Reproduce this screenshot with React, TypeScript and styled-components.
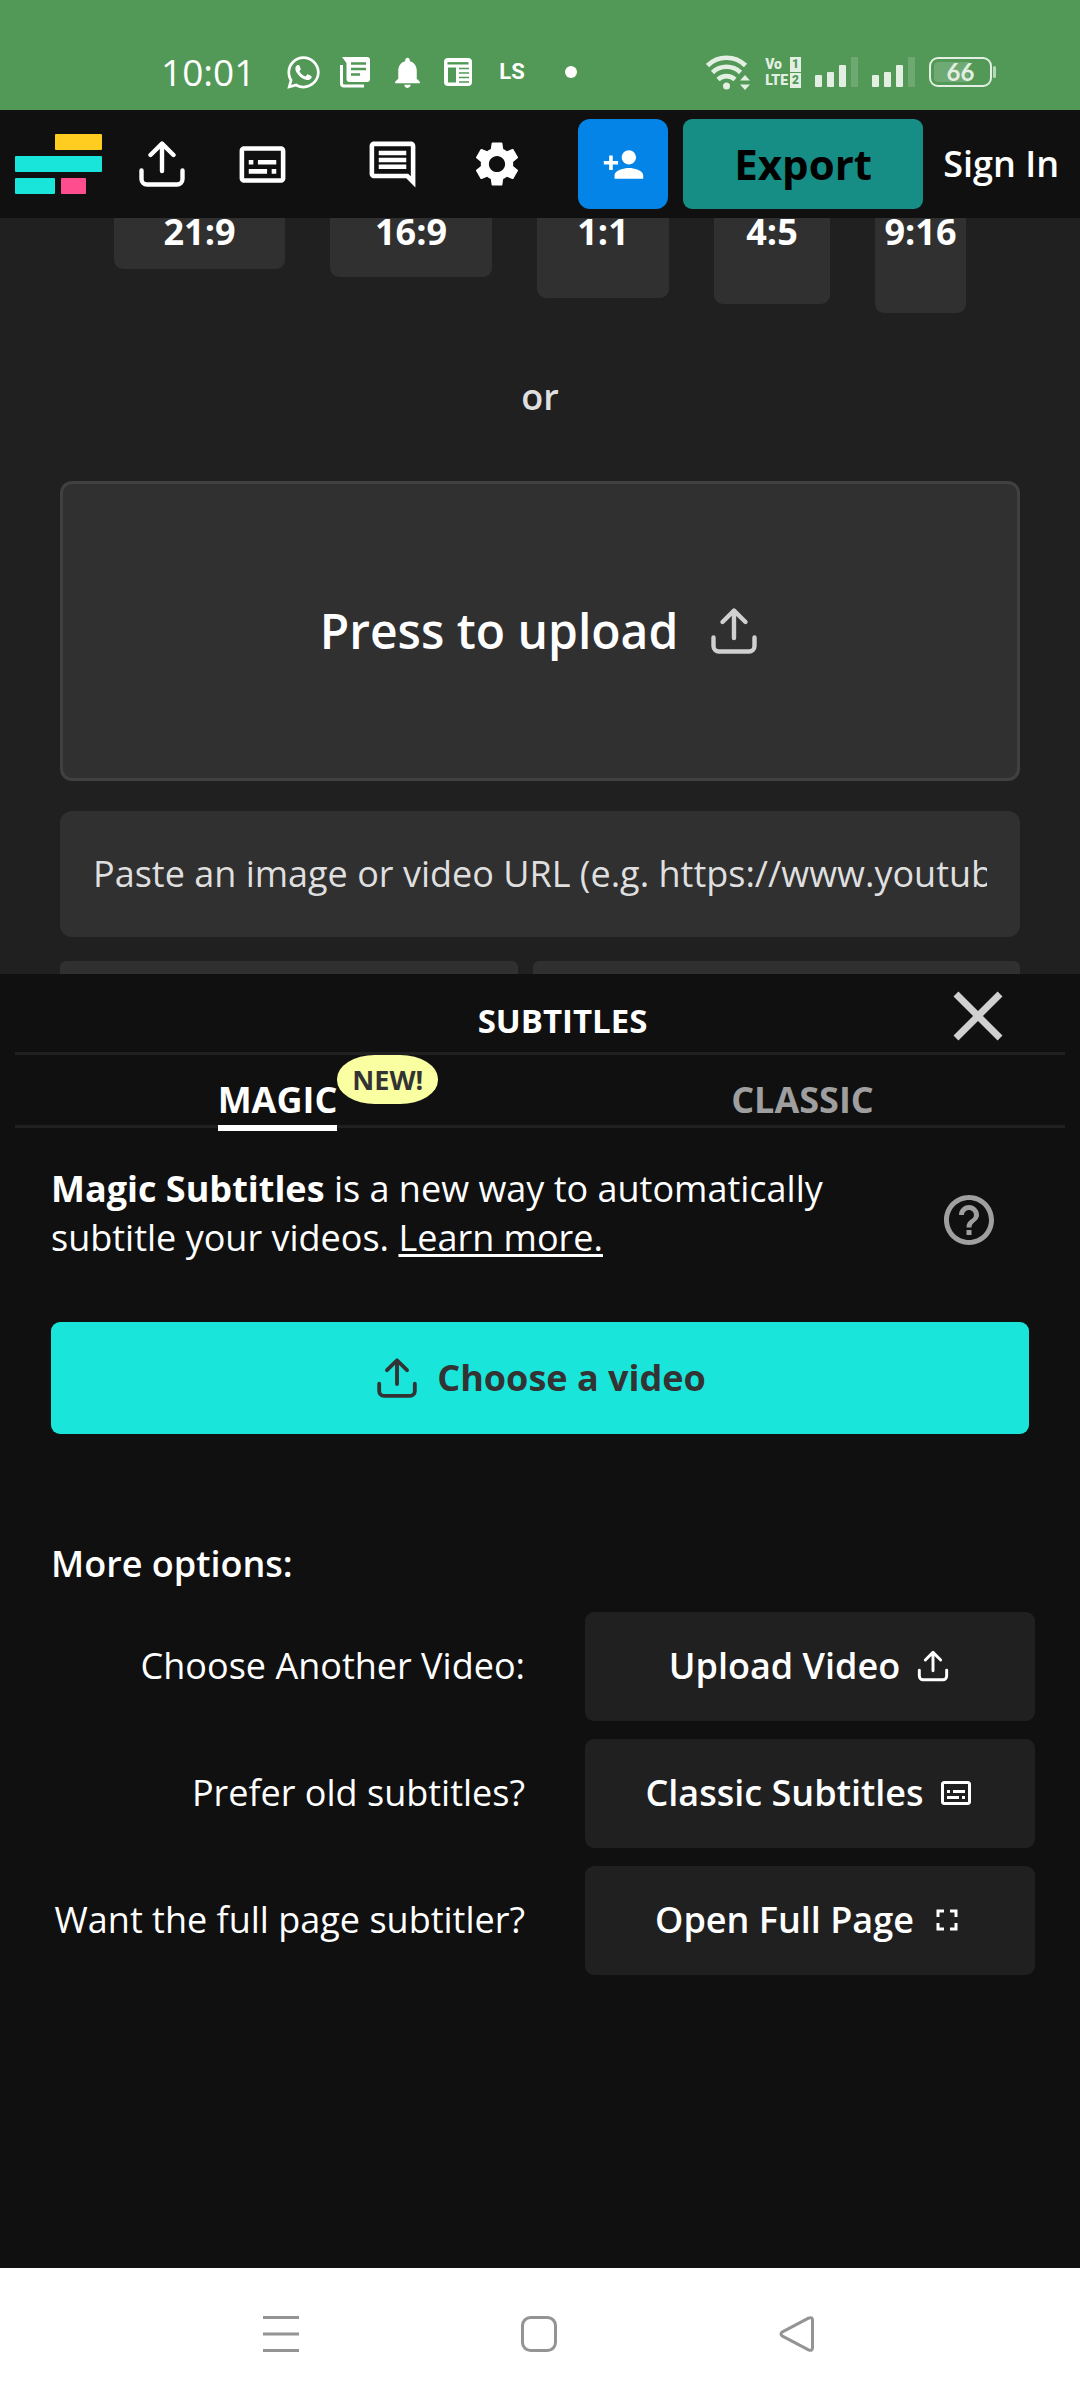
import React from "react";
import styled, { createGlobalStyle, css } from "styled-components";
import { MdOutlineSubtitles, MdOutlineComment, MdSettings, MdPersonAdd, MdClose, MdHelpOutline, MdFullscreen, MdNotifications } from "react-icons/md";
import { FaWhatsapp } from "react-icons/fa";

const Global = createGlobalStyle`
  * { box-sizing: border-box; }
  html, body { margin: 0; background: #101010; }
  body { font-family: "Open Sans", "Noto Sans", sans-serif; font-size: 36px; line-height: 48px; color: #fff; }
  button, input { font: inherit; color: inherit; border: 0; margin: 0; }
  button { padding: 0; background: none; cursor: pointer; }
  svg { display: block; flex: none; }
`;

const Page = styled.div`
  display: flex;
  flex-direction: column;
  min-height: 100vh;
`;

const StatusBar = styled.div`
  display: flex;
  justify-content: space-between;
  align-items: center;
  height: 110px;
  padding: 34px 88px 0 161px;
  background: #529856;
`;

const StatusGroup = styled.div<{ $gap: number }>`
  display: flex;
  align-items: center;
  gap: ${(p) => p.$gap}px;
`;

const Clock = styled.time`
  font-size: 37px;
  font-weight: 500;
  margin-right: 12px;
`;

const AppTag = styled.span`
  font: 700 22px/30px Roboto, sans-serif;
  margin-left: 9px;
`;

const Volte = styled.span`
  display: grid;
  grid-template-columns: auto auto;
  gap: 1px 2px;
  color: #e2efe2;
  font: 900 14px/15px Roboto, sans-serif;
`;

const SimBox = styled.span`
  padding: 0 2px;
  background: #e2efe2;
  color: #529856;
  font-size: 12px;
`;

const Battery = styled.span`
  position: relative;
  width: 63px;
  height: 30px;
  padding: 3px;
  border: 2px solid #e2efe2;
  border-radius: 9px;
  background: linear-gradient(90deg, #6fa973 66%, transparent 66%) content-box;
  color: #e2efe2;
  font: 700 24px/20px Lato, sans-serif;
  text-align: center;
  &::after {
    content: "";
    position: absolute;
    right: -6px;
    top: 7px;
    width: 3px;
    height: 12px;
    border-radius: 2px;
    background: #b9d6ba;
  }
`;

const Toolbar = styled.header`
  position: relative;
  z-index: 1;
  display: flex;
  align-items: center;
  height: 108px;
  padding: 0 15px;
  background: #101010;
`;

const ToolGroup = styled.div`
  display: flex;
  flex: 1;
  justify-content: space-between;
  align-items: center;
  padding: 0 54px 0 37px;
`;

const ToolPair = styled.div`
  display: flex;
  align-items: center;
  gap: 50px;
`;

const IconButton = styled.button`
  display: grid;
  place-items: center;
  flex: none;
`;

const HeaderButton = styled.button<{ $invite?: boolean }>`
  display: grid;
  place-items: center;
  height: 90px;
  border-radius: 9px;
  ${(p) =>
    p.$invite
      ? css`width: 90px; margin-right: 15px; background: #0384e6; border-radius: 12px;`
      : css`width: 240px; background: #168d85; color: #000; font-size: 42px; font-weight: 700;`}
`;

const SignIn = styled.a`
  margin: 0 6px 0 20px;
  color: #fff;
  font-weight: 600;
  text-decoration: none;
  white-space: nowrap;
`;

const Workspace = styled.main`
  display: flex;
  flex-direction: column;
  padding: 0 60px;
  margin-bottom: -96px;
  background: #202020;
`;

const Ratios = styled.div`
  display: flex;
  justify-content: center;
  align-items: center;
  gap: 45px;
  margin-top: -67px;
`;

const Ratio = styled.button<{ $ratio: string; $width: number }>`
  width: ${(p) => p.$width}px;
  aspect-ratio: ${(p) => p.$ratio};
  border-radius: 9px;
  background: #303030;
  font-weight: 700;
`;

const Or = styled.p`
  margin: 60px 0;
  text-align: center;
  color: #dfdfdf;
  font-weight: 600;
`;

const DropZone = styled.button`
  display: flex;
  justify-content: center;
  align-items: center;
  gap: 30px;
  height: 300px;
  border: 3px solid #404040;
  border-radius: 12px;
  background: #303030;
  font-size: 48px;
  font-weight: 600;
`;

const UrlField = styled.input`
  height: 126px;
  margin: 30px 0 24px;
  padding: 0 33px;
  border-radius: 12px;
  background: #303030;
  &::placeholder { color: #dfdfdf; opacity: 1; }
`;

const Sources = styled.div`
  display: grid;
  grid-template-columns: 458fr 487fr;
  gap: 15px;
`;

const Source = styled.button`
  height: 109px;
  border-radius: 6px;
  background: #303030;
`;

const Sheet = styled.section`
  position: relative;
  flex: 1;
  padding: 0 15px 60px;
  background: #101010;
`;

const SheetHead = styled.div`
  display: grid;
  grid-template-columns: 1fr auto 1fr;
  align-items: center;
  height: 81px;
  padding: 0 45px 0 90px;
  border-bottom: 3px solid #202020;
`;

const SheetTitle = styled.h2`
  grid-column: 2;
  margin: 10px 0 0;
  font-size: 33px;
  line-height: 48px;
  font-weight: 700;
`;

const CloseButton = styled(IconButton)`
  justify-self: end;
  color: #d0d0d0;
`;

const Tabs = styled.div`
  display: grid;
  grid-template-columns: 1fr 1fr;
  height: 73px;
  border-bottom: 3px solid #202020;
`;

const Tab = styled.button<{ $active?: boolean }>`
  position: relative;
  justify-self: center;
  height: 76px;
  padding-top: 21px;
  color: ${(p) => (p.$active ? "#fff" : "#9f9f9f")};
  font-weight: 700;
  border-bottom: 6px solid ${(p) => (p.$active ? "#fff" : "transparent")};
`;

const Badge = styled.span`
  position: absolute;
  left: 100%;
  top: 0;
  padding: 0 15px;
  border-radius: 38px / 24px;
  background: #faffa2;
  color: #333;
  font-size: 27px;
  line-height: 49px;
`;

const Body = styled.div`
  display: flex;
  flex-direction: column;
  padding: 36px 36px 0;
`;

const Intro = styled.div`
  display: flex;
  justify-content: space-between;
  align-items: center;
  padding-right: 30px;
`;

const IntroText = styled.p`
  margin: 0;
  max-width: 810px;
  line-height: 49px;
`;

const LearnMore = styled.a`
  color: #fff;
  text-decoration-thickness: 3px;
  text-underline-offset: 3px;
`;

const HelpButton = styled(IconButton)`
  color: #9f9f9f;
  margin-top: 15px;
`;

const Primary = styled.button`
  display: flex;
  justify-content: center;
  align-items: center;
  gap: 20px;
  height: 112px;
  margin-top: 60px;
  padding-left: 3px;
  border-radius: 9px;
  background: #1ae5da;
  color: #333;
  font-weight: 700;
`;

const OptionsTitle = styled.h3`
  margin: 105px 0 24px;
  font-size: 36px;
  line-height: 49px;
  font-weight: 600;
`;

const Options = styled.div`
  display: grid;
  grid-template-columns: 1fr 450px;
  gap: 18px 60px;
  align-items: center;
  margin-right: -6px;
`;

const OptionLabel = styled.label`
  text-align: right;
  white-space: nowrap;
`;

const OptionButton = styled.button`
  display: flex;
  justify-content: center;
  align-items: center;
  gap: 15px;
  height: 109px;
  border-radius: 9px;
  background: #202020;
  font-weight: 600;
`;

const NavBar = styled.nav`
  display: flex;
  justify-content: space-between;
  align-items: center;
  height: 132px;
  padding: 0 265px 0 263px;
  background: #fff;
`;

const UploadIcon = ({ size, inset = 0, color = "currentColor" }: { size: number; inset?: number; color?: string }) => (
  <svg
    width={size}
    height={size}
    viewBox={`${-inset} ${-inset} ${46 + inset * 2} ${46 + inset * 2}`}
    fill="none"
    stroke={color}
    strokeWidth="4.400"
    strokeLinecap="round"
    strokeLinejoin="round"
    aria-hidden="true"
  >
    <path d="M23 30V3M11.500 14 23 2.600 34.500 14M2.500 29.500V38a5.500 5.500 0 0 0 5.500 5.500h30a5.500 5.500 0 0 0 5.500-5.500v-8.500" />
  </svg>
);

const Logo = () => (
  <svg width="87" height="60" viewBox="0 0 87 60" role="img" aria-label="Home">
    <rect x="40" width="47" height="16" rx="1" fill="#ffcd1f" />
    <rect y="22" width="87" height="16" rx="1" fill="#1ae5da" />
    <rect y="44" width="40" height="16" rx="1" fill="#1ae5da" />
    <rect x="46" y="44" width="25" height="16" rx="1" fill="#ff4d8e" />
  </svg>
);

const NewsIcon = () => (
  <svg width="31" height="31" viewBox="0 0 31 31" aria-hidden="true">
    <path d="M2 0h25a3 3 0 0 1 3 3v19a3 3 0 0 1-3 3H9.500a3 3 0 0 1-3-3V6z" fill="#fff" />
    <path d="M1.500 8v18.500a2.500 2.500 0 0 0 2.500 2.500h20" fill="none" stroke="#fff" strokeWidth="3" />
    <path d="M11 6.500h15M11 12h15M11 17.500h9" stroke="#529856" strokeWidth="2.500" />
  </svg>
);

const LayoutIcon = () => (
  <svg width="28" height="28" viewBox="0 0 28 28" aria-hidden="true">
    <rect width="28" height="28" rx="4" fill="#fff" />
    <path d="M3.500 5.300h21" stroke="#529856" strokeWidth="2.400" />
    <path d="M4 9.500h8v15H4z" fill="#529856" />
    <path d="M15 10.500h10M15 15h10M15 19.500h10M15 24h10" stroke="#529856" strokeWidth="1.600" />
  </svg>
);

const WifiIcon = () => (
  <svg width="45" height="35" viewBox="0 0 45 35" fill="none" stroke="#e2efe2" strokeWidth="4.600" aria-hidden="true">
    <path d="M1.500 10.500a27 27 0 0 1 38 0M6.500 17.500a20 20 0 0 1 28 0M12 24.500a12.500 12.500 0 0 1 17 0" />
    <circle cx="20.500" cy="31" r="3.500" fill="#e2efe2" stroke="none" />
    <path d="M34 25.500 39 20l5 5.500zM34 29.500l5 5.500 5-5.500z" fill="#e2efe2" stroke="none" />
  </svg>
);

const SignalIcon = () => (
  <svg width="43" height="30" viewBox="0 0 43 30" fill="#e2efe2" aria-hidden="true">
    <rect y="18" width="7" height="12" rx="1" />
    <rect x="12" y="15" width="7" height="15" rx="1" />
    <rect x="24" y="8" width="7" height="22" rx="1" />
    <rect x="36" width="7" height="30" rx="1" opacity=".2" />
  </svg>
);

const ratios = [
  { label: "21:9", ratio: "21 / 9", width: 171 },
  { label: "16:9", ratio: "16 / 9", width: 162 },
  { label: "1:1", ratio: "1 / 1", width: 132 },
  { label: "4:5", ratio: "4 / 5", width: 116 },
  { label: "9:16", ratio: "9 / 16", width: 91 },
];

const options = [
  { id: "upload", label: "Choose Another Video:", action: "Upload Video", icon: <UploadIcon size={36} inset={4} /> },
  { id: "classic", label: "Prefer old subtitles?", action: "Classic Subtitles", icon: <MdOutlineSubtitles size={36} /> },
  { id: "full", label: "Want the full page subtitler?", action: "Open Full Page", icon: <MdFullscreen size={36} /> },
];

export default function App() {
  return (
    <Page>
      <Global />
      <StatusBar>
        <StatusGroup $gap={18}>
          <Clock>10:01</Clock>
          <FaWhatsapp size={37} />
          <NewsIcon />
          <MdNotifications size={37} />
          <LayoutIcon />
          <AppTag>LS</AppTag>
          <svg width="60" height="12" viewBox="0 0 60 12" fill="#fff" aria-hidden="true"><circle cx="28" cy="6" r="6" /></svg>
        </StatusGroup>
        <StatusGroup $gap={14}>
          <WifiIcon />
          <Volte>
            <span>Vo</span><SimBox>1</SimBox>
            <span>LTE</span><SimBox>2</SimBox>
          </Volte>
          <SignalIcon />
          <SignalIcon />
          <Battery>66</Battery>
        </StatusGroup>
      </StatusBar>

      <Toolbar>
        <Logo />
        <ToolGroup>
          <ToolPair>
            <IconButton aria-label="Upload"><UploadIcon size={46} /></IconButton>
            <IconButton aria-label="Subtitles"><MdOutlineSubtitles size={55} /></IconButton>
          </ToolPair>
          <ToolPair>
            <IconButton aria-label="Comments"><MdOutlineComment size={55} /></IconButton>
            <IconButton aria-label="Settings"><MdSettings size={54} /></IconButton>
          </ToolPair>
        </ToolGroup>
        <HeaderButton $invite aria-label="Invite"><MdPersonAdd size={43} /></HeaderButton>
        <HeaderButton>Export</HeaderButton>
        <SignIn href="#signin">Sign In</SignIn>
      </Toolbar>

      <Workspace>
        <Ratios>
          {ratios.map((r) => (
            <Ratio key={r.label} $ratio={r.ratio} $width={r.width}>{r.label}</Ratio>
          ))}
        </Ratios>
        <Or>or</Or>
        <DropZone>Press to upload<UploadIcon size={52} inset={3} color="#d0d0d0" /></DropZone>
        <UrlField type="url" aria-label="Image or video URL" placeholder="Paste an image or video URL (e.g. https://www.youtube.com/watch?v=)" />
        <Sources>
          <Source aria-label="Image search" />
          <Source aria-label="Sample video" />
        </Sources>
      </Workspace>

      <Sheet>
        <SheetHead>
          <SheetTitle>SUBTITLES</SheetTitle>
          <CloseButton aria-label="Close"><MdClose size={84} /></CloseButton>
        </SheetHead>
        <Tabs>
          <Tab $active>MAGIC<Badge>NEW!</Badge></Tab>
          <Tab>CLASSIC</Tab>
        </Tabs>
        <Body>
          <Intro>
            <IntroText>
              <b>Magic Subtitles</b> is a new way to automatically subtitle your videos. <LearnMore href="#learn">Learn more.</LearnMore>
            </IntroText>
            <HelpButton aria-label="Help"><MdHelpOutline size={60} /></HelpButton>
          </Intro>
          <Primary><UploadIcon size={40} />Choose a video</Primary>
          <OptionsTitle>More options:</OptionsTitle>
          <Options>
            {options.map((o) => (
              <React.Fragment key={o.id}>
                <OptionLabel htmlFor={o.id}>{o.label}</OptionLabel>
                <OptionButton id={o.id}>{o.action}{o.icon}</OptionButton>
              </React.Fragment>
            ))}
          </Options>
        </Body>
      </Sheet>

      <NavBar>
        <IconButton aria-label="Recent apps">
          <svg width="36" height="36" viewBox="0 0 36 36" stroke="#949494" strokeWidth="3"><path d="M0 1.500h36M0 18h36M0 34.500h36" /></svg>
        </IconButton>
        <IconButton aria-label="Home screen">
          <svg width="36" height="36" viewBox="0 0 36 36" fill="none" stroke="#949494" strokeWidth="3"><rect x="1.500" y="1.500" width="33" height="33" rx="8" /></svg>
        </IconButton>
        <IconButton aria-label="Back">
          <svg width="36" height="36" viewBox="0 0 36 36" fill="none" stroke="#949494" strokeWidth="3" strokeLinejoin="round"><path d="M3 16.200 29.500 2.200q4-1.500 4 2v27.600q0 3.500-4 2L3 19.800q-2-1.800 0-3.600z" /></svg>
        </IconButton>
      </NavBar>
    </Page>
  );
}
